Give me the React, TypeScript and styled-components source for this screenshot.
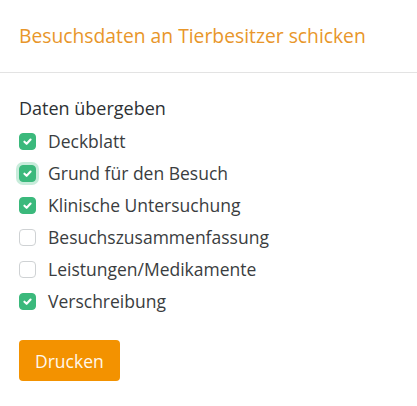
import styled, { createGlobalStyle, css } from "styled-components";

const GlobalStyle = createGlobalStyle`
  html, body {
    margin: 0;
    padding: 0;
    background: #ffffff;
  }
  body {
    font-family: "Open Sans", "Liberation Sans", sans-serif;
    -webkit-font-smoothing: antialiased;
  }
`;

const Panel = styled.div`
  width: 417px;
  min-height: 406px;
  background: #ffffff;
`;

const Header = styled.div`
  padding: 24px 19px 0;
  height: 48px;
  border-bottom: 1px solid #e3e3e3;
  box-sizing: content-box;
`;

const Title = styled.h2`
  margin: 0;
  font-size: 19.3px;
  font-weight: 500;
  line-height: 24px;
  color: #e8962a;
`;

const Body = styled.div`
  padding: 24px 19px 0;
`;

const SectionTitle = styled.h3`
  margin: 0 0 11px;
  font-size: 18px;
  font-weight: 500;
  line-height: 22px;
  color: #2d3134;
`;

const OptionList = styled.ul`
  list-style: none;
  margin: 0;
  padding: 0;
  display: flex;
  flex-direction: column;
  gap: 10px;
`;

const Option = styled.li`
  display: flex;
  align-items: center;
  gap: 12px;
  height: 22px;
  font-size: 17.5px;
  color: #3a3d40;
`;

const Box = styled.span<{ $checked: boolean; $focused?: boolean }>`
  width: 17px;
  height: 17px;
  box-sizing: border-box;
  border-radius: 4px;
  display: inline-flex;
  align-items: center;
  justify-content: center;
  flex-shrink: 0;
  ${({ $checked }) =>
    $checked
      ? css`
          background: #3bb97c;
          border: 1px solid #3bb97c;
        `
      : css`
          background: #ffffff;
          border: 1px solid #cfd2d4;
        `}
  ${({ $focused }) =>
    $focused &&
    css`
      box-shadow: 0 0 0 3px rgba(59, 185, 124, 0.28);
    `}
`;

const Button = styled.button`
  margin-top: 28px;
  height: 41px;
  padding: 0 16px;
  border: none;
  border-radius: 4px;
  background: #f39200;
  color: #fff8ec;
  font-family: "Open Sans", "Liberation Sans", sans-serif;
  font-size: 17.5px;
  font-weight: 500;
  cursor: pointer;
`;

function Check() {
  return (
    <svg width="11" height="11" viewBox="0 0 10 10" fill="none">
      <path
        d="M2.2 5.2 L4.2 7.1 L7.8 3.2"
        stroke="#ffffff"
        strokeWidth="1.9"
        strokeLinecap="round"
        strokeLinejoin="round"
      />
    </svg>
  );
}

const options = [
  { label: "Deckblatt", checked: true },
  { label: "Grund für den Besuch", checked: true, focused: true },
  { label: "Klinische Untersuchung", checked: true },
  { label: "Besuchszusammenfassung", checked: false },
  { label: "Leistungen/Medikamente", checked: false },
  { label: "Verschreibung", checked: true },
];

export default function App() {
  return (
    <>
      <GlobalStyle />
      <Panel>
        <Header>
          <Title>Besuchsdaten an Tierbesitzer schicken</Title>
        </Header>
        <Body>
          <SectionTitle>Daten übergeben</SectionTitle>
          <OptionList>
            {options.map((o) => (
              <Option key={o.label}>
                <Box $checked={o.checked} $focused={o.focused}>
                  {o.checked && <Check />}
                </Box>
                {o.label}
              </Option>
            ))}
          </OptionList>
          <Button>Drucken</Button>
        </Body>
      </Panel>
    </>
  );
}
